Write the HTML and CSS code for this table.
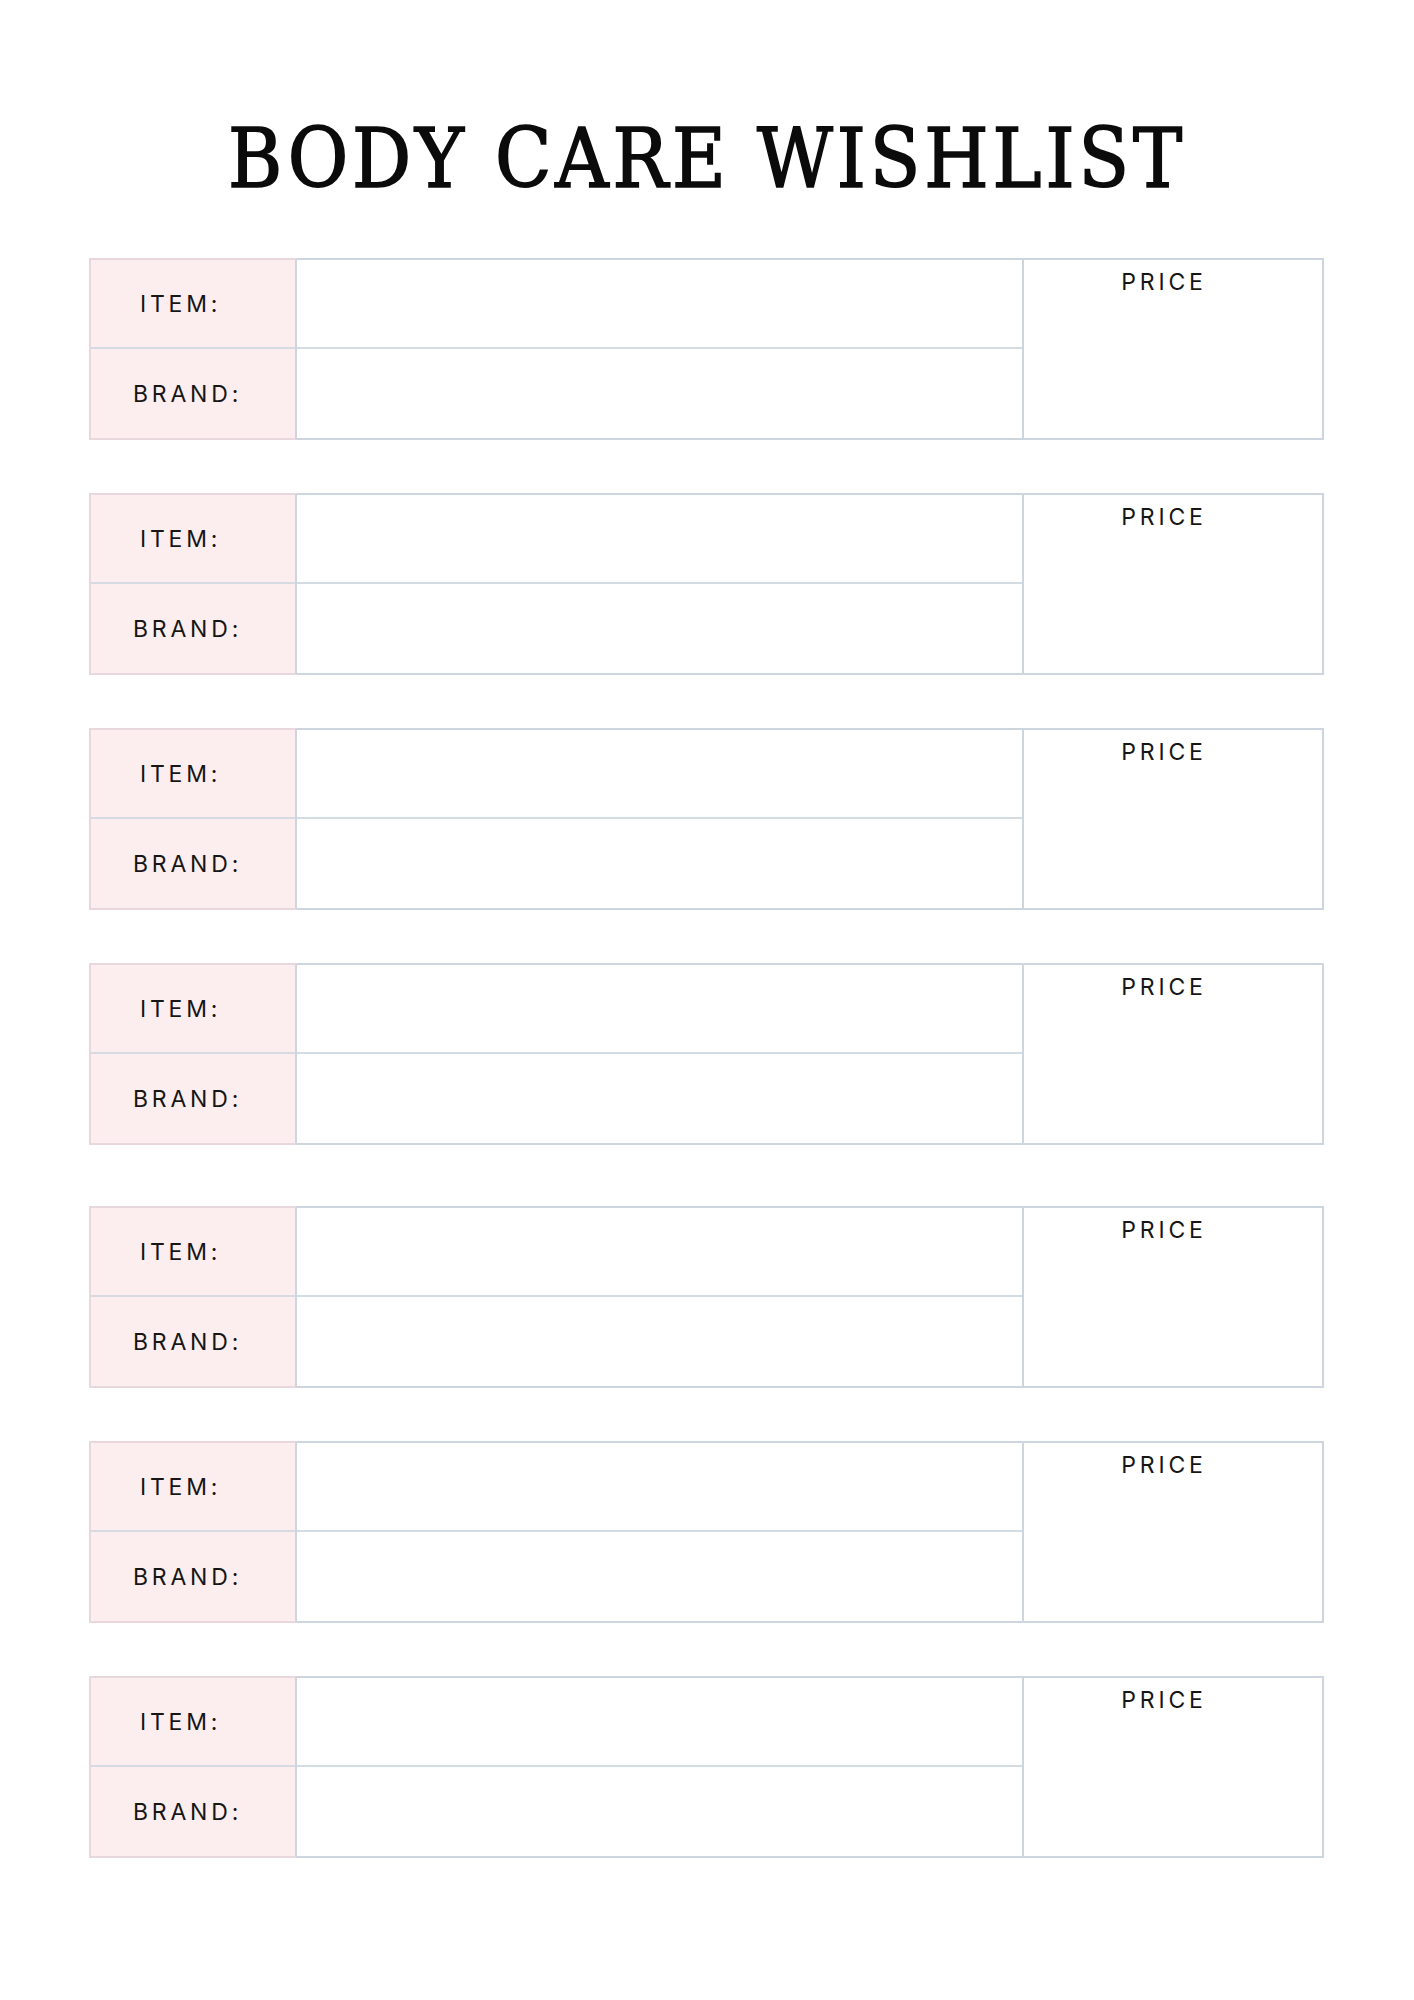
FILE: index.html
```html
<!DOCTYPE html>
<html lang="en">
<head>
<meta charset="utf-8">
<title>Body Care Wishlist</title>
<link rel="stylesheet" href="styles.css">
</head>
<body>
<main class="page">
  <h1 class="title">BODY CARE WISHLIST</h1>
  <div class="list">
    <section class="entry">
      <div class="labels"><div class="label label-item">ITEM:</div><div class="label label-brand">BRAND:</div></div>
      <div class="fields"><div class="field"></div><div class="field"></div></div>
      <div class="price">PRICE</div>
    </section>
    <section class="entry">
      <div class="labels"><div class="label label-item">ITEM:</div><div class="label label-brand">BRAND:</div></div>
      <div class="fields"><div class="field"></div><div class="field"></div></div>
      <div class="price">PRICE</div>
    </section>
    <section class="entry">
      <div class="labels"><div class="label label-item">ITEM:</div><div class="label label-brand">BRAND:</div></div>
      <div class="fields"><div class="field"></div><div class="field"></div></div>
      <div class="price">PRICE</div>
    </section>
    <section class="entry">
      <div class="labels"><div class="label label-item">ITEM:</div><div class="label label-brand">BRAND:</div></div>
      <div class="fields"><div class="field"></div><div class="field"></div></div>
      <div class="price">PRICE</div>
    </section>
    <section class="entry entry-wide-gap">
      <div class="labels"><div class="label label-item">ITEM:</div><div class="label label-brand">BRAND:</div></div>
      <div class="fields"><div class="field"></div><div class="field"></div></div>
      <div class="price">PRICE</div>
    </section>
    <section class="entry">
      <div class="labels"><div class="label label-item">ITEM:</div><div class="label label-brand">BRAND:</div></div>
      <div class="fields"><div class="field"></div><div class="field"></div></div>
      <div class="price">PRICE</div>
    </section>
    <section class="entry">
      <div class="labels"><div class="label label-item">ITEM:</div><div class="label label-brand">BRAND:</div></div>
      <div class="fields"><div class="field"></div><div class="field"></div></div>
      <div class="price">PRICE</div>
    </section>
  </div>
</main>
</body>
</html>
```

FILE: styles.css
```css
html, body {
  margin: 0;
  padding: 0;
  background: #ffffff;
}

.page {
  width: 1414px;
  min-height: 2000px;
  box-sizing: border-box;
  padding-top: 114px;
}

.title {
  margin: 0;
  text-align: center;
  font-family: "DejaVu Serif", serif;
  font-stretch: condensed;
  font-weight: normal;
  font-size: 82px;
  line-height: 90px;
  color: #0b0b0b;
  letter-spacing: 3.9px;
  -webkit-text-stroke: 1.6px #0b0b0b;
}

.list {
  display: flex;
  flex-direction: column;
  gap: 53px;
  margin-top: 54px;
  margin-left: 89px;
  width: 1235px;
}

.entry {
  display: grid;
  grid-template-columns: 208px 725px 302px;
  height: 182px;
}

.entry-wide-gap {
  margin-top: 8px;
}

.labels {
  display: grid;
  grid-template-rows: 1fr 1fr;
  background: #fcedee;
  border: 2px solid #e8d7dc;
  border-right-color: #cdd6df;
}

.label {
  display: flex;
  align-items: center;
  font-family: "Inter", "Liberation Sans", sans-serif;
  font-size: 23px;
  font-weight: 400;
  letter-spacing: 3.8px;
  color: #161616;
}

.label-item {
  padding-left: 49px;
  border-bottom: 2px solid #d6dbe3;
}

.label-brand {
  padding-left: 42px;
}

.fields {
  display: grid;
  grid-template-rows: 1fr 1fr;
  border-top: 2px solid #cdd6df;
  border-bottom: 2px solid #cdd6df;
}

.field:first-child {
  border-bottom: 2px solid #d3dbe3;
}

.price {
  border: 2px solid #cdd6df;
  padding-top: 8px;
  padding-right: 18px;
  text-align: center;
  font-family: "Inter", "Liberation Sans", sans-serif;
  font-size: 23px;
  font-weight: 400;
  letter-spacing: 3.8px;
  color: #161616;
}
```
